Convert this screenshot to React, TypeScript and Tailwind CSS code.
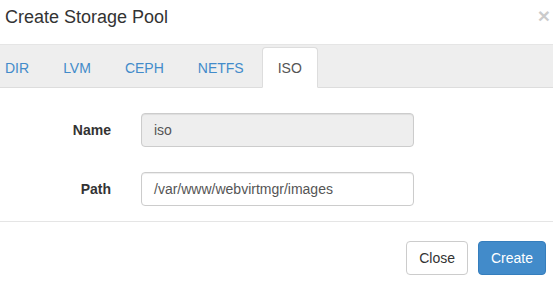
import React from "react";

const tabs = ["DIR", "LVM", "CEPH", "NETFS", "ISO"];

export default function App() {
  return (
    <div
      className="w-[553px] h-[287px] bg-white overflow-hidden text-[14px] text-[#333]"
      style={{ fontFamily: '"Liberation Sans", Arial, sans-serif' }}
    >
      {/* Header */}
      <div className="h-[45px] border-b border-[#e5e5e5] flex justify-between items-start">
        <h4 className="pl-[5px] pt-[4px] text-[18px] leading-[26px] text-[#333] font-normal">
          Create Storage Pool
        </h4>
        <span className="mr-[3px] mt-[3px] text-[21px] leading-[26px] font-bold text-black opacity-20">
          ×
        </span>
      </div>

      {/* Tabs */}
      <div className="h-[43px] bg-[#eeeeee] border-b border-[#dddddd] flex items-end">
        <ul className="flex items-end -ml-[11px]">
          {tabs.map((t) => {
            const active = t === "ISO";
            return (
              <li
                key={t}
                className={
                  active
                    ? "h-[41px] -mb-px mr-[2px] px-[15px] pt-[10px] leading-[20px] bg-white border border-[#dddddd] border-b-transparent rounded-t-[4px] text-[#555555]"
                    : "h-[41px] -mb-px mr-[2px] px-[15px] pt-[10px] leading-[20px] border border-transparent text-[#428bca]"
                }
              >
                {t}
              </li>
            );
          })}
        </ul>
      </div>

      {/* Body */}
      <div className="pt-[25px] pb-[15px] border-b border-[#e5e5e5] flex flex-col gap-[25px]">
        <div className="flex items-center">
          <label className="w-[111px] text-right font-bold leading-[20px]">Name</label>
          <div className="ml-[30px] w-[273px] h-[34px] px-[12px] flex items-center border border-[#cccccc] rounded-[4px] bg-[#eeeeee] text-[#555555] shadow-[inset_0_1px_1px_rgba(0,0,0,0.075)]">
            iso
          </div>
        </div>
        <div className="flex items-center">
          <label className="w-[111px] text-right font-bold leading-[20px]">Path</label>
          <div className="ml-[30px] w-[273px] h-[34px] px-[12px] flex items-center border border-[#cccccc] rounded-[4px] bg-white text-[#555555] shadow-[inset_0_1px_1px_rgba(0,0,0,0.075)]">
            /var/www/webvirtmgr/images
          </div>
        </div>
      </div>

      {/* Footer */}
      <div className="pt-[19px] pr-[7px] flex justify-end gap-[10px]">
        <button className="h-[34px] px-[12px] border border-[#cccccc] rounded-[4px] bg-white text-[#333] leading-[20px]">
          Close
        </button>
        <button className="h-[34px] px-[12px] border border-[#357ebd] rounded-[4px] bg-[#428bca] text-white leading-[20px]">
          Create
        </button>
      </div>
    </div>
  );
}
